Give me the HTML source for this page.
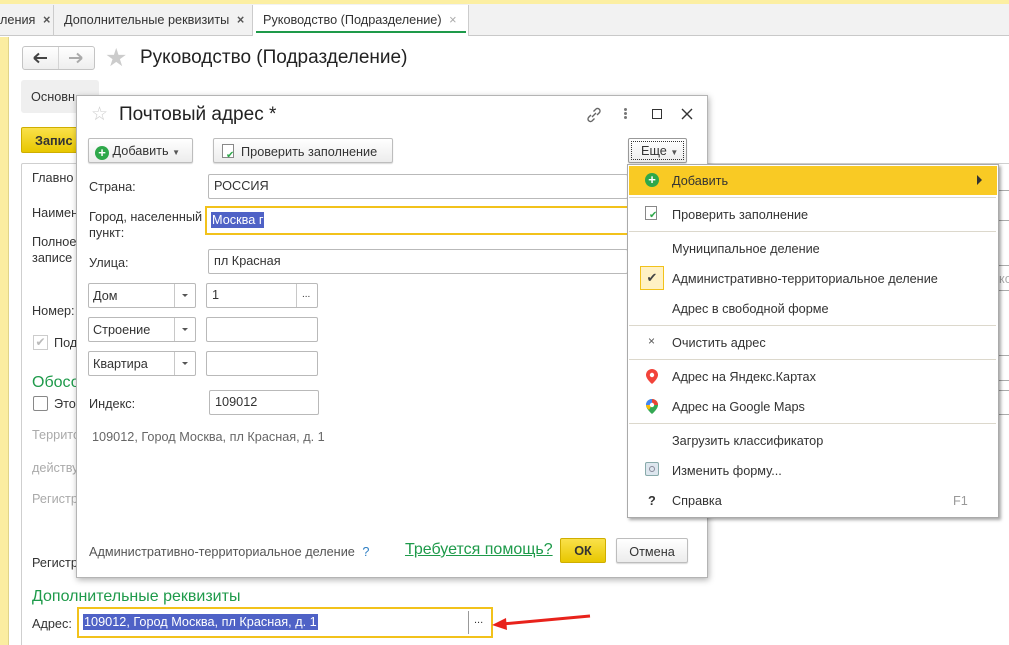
<!DOCTYPE html>
<html><head><meta charset="utf-8"><style>
*{box-sizing:border-box;margin:0;padding:0}
html,body{width:1009px;height:645px;overflow:hidden}
body{position:relative;background:#fff;font-family:"Liberation Sans",Arial,sans-serif;font-size:12.7px;color:#333}
.a{position:absolute;white-space:nowrap}
.inp{position:absolute;border:1px solid #b9b9b9;border-radius:2px;background:#fff;padding:4px 5px;color:#333}
.btn{position:absolute;border:1px solid #bdbdbd;border-radius:2px;background:linear-gradient(#fff,#ececec);box-shadow:0 1px 1px rgba(0,0,0,.15);color:#333;padding:4px 8px}
.sel{position:absolute;border:1px solid #b9b9b9;border-radius:2px;background:#fff}
.sel span{position:absolute;left:4px;top:5px}
.sel i{position:absolute;right:0;top:0;bottom:0;width:21px;border-left:1px solid #c8c8c8}
.sel i:after{content:"";position:absolute;left:7px;top:10px;border:3px solid transparent;border-top:3px solid #555}
.mi{position:absolute;left:672px;color:#333}
.sep{position:absolute;left:629px;width:367px;height:1px;background:#dcd8cc}
.g{color:#aaa}
</style></head><body>
<div class="a" style="left:0;top:0;width:1009px;height:4px;background:#fcefa3"></div>
<div class="a" style="left:0;top:4px;width:1009px;height:32px;background:#f2f2f2;border-bottom:1px solid #c9c9c9"></div>
<div class="a" style="left:0;top:5px;width:54px;height:31px;border-right:1px solid #ccc;padding:8px 0 0 0">ления <b style="margin-left:4px;color:#555">×</b></div>
<div class="a" style="left:54px;top:5px;width:199px;height:31px;border-right:1px solid #ccc;padding:8px 0 0 10px">Дополнительные реквизиты <b style="margin-left:4px;color:#555">×</b></div>
<div class="a" style="left:253px;top:5px;width:216px;height:31px;background:#fff;border-right:1px solid #ccc;padding:8px 0 0 10px">Руководство (Подразделение) <span style="margin-left:4px;color:#aaa">×</span></div>
<div class="a" style="left:256px;top:31px;width:210px;height:2px;background:#1e9a4a"></div>
<div class="a" style="left:0;top:37px;width:9px;height:608px;background:#fbeda1;border-right:1px solid #e0d48a"></div>
<div class="a" style="left:22px;top:46px;width:73px;height:24px;border:1px solid #c4c4c4;border-radius:3px;background:linear-gradient(#fff,#eee)"></div>
<div class="a" style="left:58px;top:47px;width:1px;height:22px;background:#d4d4d4"></div>
<svg class="a" style="left:32px;top:51px" width="16" height="14"><path d="M2 7H15M2 7L7 2.5M2 7L7 11.5" stroke="#444" stroke-width="2" fill="none"/></svg>
<svg class="a" style="left:68px;top:51px" width="16" height="14"><path d="M1 7H14M14 7L9 2.5M14 7L9 11.5" stroke="#aaa" stroke-width="2" fill="none"/></svg>
<div class="a" style="left:105px;top:43px;font-size:25px;color:#ccc">★</div>
<div class="a" style="left:140px;top:47px;font-size:19px;color:#222">Руководство (Подразделение)</div>
<div class="a" style="left:21px;top:80px;width:78px;height:33px;background:#efefef;border-radius:3px;padding:10px 0 0 10px">Основн</div>
<div class="a" style="left:21px;top:127px;width:60px;height:26px;background:linear-gradient(#fae14a,#e8c700);border:1px solid #cfae00;border-radius:2px;padding:6px 0 0 13px;font-weight:bold;color:#333">Запис</div>
<div class="a" style="left:21px;top:163px;width:1000px;height:490px;border:1px solid #cfcfcf;border-radius:2px"></div>
<div class="a" style="left:32px;top:171px">Главно</div>
<div class="a" style="left:32px;top:206px">Наимен</div>
<div class="a" style="left:32px;top:235px">Полное</div>
<div class="a" style="left:32px;top:251px">записе</div>
<div class="a" style="left:32px;top:304px">Номер:</div>
<div class="a" style="left:33px;top:335px;width:15px;height:15px;border:1px solid #ccc;color:#bbb;font-size:12px;line-height:13px;text-align:center">✔</div>
<div class="a" style="left:54px;top:336px">Под</div>
<div class="a" style="left:32px;top:374px;font-size:16px;color:#1e9a4a">Обосо</div>
<div class="a" style="left:33px;top:396px;width:15px;height:15px;border:1px solid #888;border-radius:2px"></div>
<div class="a" style="left:54px;top:397px">Это</div>
<div class="a g" style="left:32px;top:428px">Террито</div>
<div class="a g" style="left:32px;top:461px">действу</div>
<div class="a g" style="left:32px;top:492px">Регистр</div>
<div class="a" style="left:32px;top:556px">Регистр</div>
<div class="a" style="left:32px;top:588px;font-size:16px;color:#1e9a4a">Дополнительные реквизиты</div>
<div class="a" style="left:32px;top:617px">Адрес:</div>
<div class="a" style="left:77px;top:607px;width:416px;height:31px;border:2px solid #f2c21b;background:#fff"></div>
<div class="a" style="left:83px;top:614px;background:#4f62c6;color:#fff;padding:1px 1px">109012, Город Москва, пл Красная, д. 1</div>
<div class="a" style="left:468px;top:611px;width:1px;height:23px;background:#999"></div>
<div class="a" style="left:474px;top:614px;font-size:11px">...</div>
<svg class="a" style="left:490px;top:610px" width="105" height="22"><line x1="100" y1="6" x2="12" y2="14" stroke="#e8221b" stroke-width="3"/><polygon points="2,15 16,8 17,20" fill="#e8221b"/></svg>
<div class="a" style="left:999px;top:190px;width:10px;height:1px;background:#aaa"></div>
<div class="a" style="left:999px;top:220px;width:10px;height:1px;background:#aaa"></div>
<div class="a" style="left:999px;top:265px;width:10px;height:1px;background:#aaa"></div>
<div class="a" style="left:999px;top:290px;width:10px;height:1px;background:#aaa"></div>
<div class="a" style="left:999px;top:355px;width:10px;height:1px;background:#aaa"></div>
<div class="a" style="left:999px;top:380px;width:10px;height:1px;background:#aaa"></div>
<div class="a" style="left:999px;top:390px;width:10px;height:1px;background:#aaa"></div>
<div class="a" style="left:999px;top:414px;width:10px;height:1px;background:#aaa"></div>
<div class="a g" style="left:999px;top:272px">ко</div>
<!-- dialog -->
<div class="a" style="left:76px;top:95px;width:632px;height:483px;background:#fff;border:1px solid #b4b4b4;box-shadow:1px 2px 6px rgba(0,0,0,.3)"></div>
<div class="a" style="left:91px;top:103px;font-size:19px;color:#ccc">☆</div>
<div class="a" style="left:119px;top:104px;font-size:19px;color:#222">Почтовый адрес *</div>
<svg class="a" style="left:585px;top:106px" width="18" height="18" fill="none" stroke="#666" stroke-width="1.4"><path d="M7 11 L11 7 M6 9 L3.5 11.5 a2.5 2.5 0 0 0 3.5 3.5 L9.5 12.5 M12 9 L14.5 6.5 a2.5 2.5 0 0 0 -3.5 -3.5 L8.5 5.5"/></svg>
<div class="a" style="left:624px;top:108px;width:3px;height:3px;background:#777;border-radius:50%;box-shadow:0 4px 0 #777,0 8px 0 #777"></div>
<div class="a" style="left:652px;top:109px;width:10px;height:10px;border:1.5px solid #333"></div>
<svg class="a" style="left:681px;top:108px" width="12" height="12"><path d="M1 1L11 11M11 1L1 11" stroke="#333" stroke-width="1.4"/></svg>
<div class="btn" style="left:88px;top:138px;width:105px;height:25px;padding:5px 0 0 6px"><span style="display:inline-block;width:14px;height:14px;border-radius:50%;background:#2ea84a;color:#fff;font-weight:bold;font-size:13px;line-height:13px;text-align:center;vertical-align:-2px">+</span> Добавить <span style="font-size:8px;color:#555">▼</span></div>
<div class="btn" style="left:213px;top:138px;width:180px;height:25px;padding:5px 0 0 8px"><span style="display:inline-block;width:12px;height:14px;border:1px solid #888;background:#fff;vertical-align:-2px;position:relative"><span style="position:absolute;left:3px;top:5px;color:#2ea84a;font-size:10px">✔</span></span> &nbsp;Проверить заполнение</div>
<div class="btn" style="left:628px;top:138px;width:59px;height:25px;padding:5px 0 0 12px;border-color:#999"><span style="position:absolute;inset:2px;border:1px dotted #333"></span>Еще <span style="font-size:8px;color:#555">▼</span></div>
<div class="a" style="left:89px;top:180px">Страна:</div>
<div class="inp" style="left:208px;top:174px;width:420px;height:25px">РОССИЯ</div>
<div class="a" style="left:89px;top:210px">Город, населенный</div>
<div class="a" style="left:89px;top:226px">пункт:</div>
<div class="a" style="left:205px;top:206px;width:430px;height:29px;border:2px solid #f2c21b;background:#fff"></div>
<div class="a" style="left:211px;top:212px;background:#4f62c6;color:#fff;padding:1px 1px">Москва г</div>
<div class="a" style="left:89px;top:256px">Улица:</div>
<div class="inp" style="left:208px;top:249px;width:420px;height:25px">пл Красная</div>
<div class="sel" style="left:88px;top:283px;width:108px;height:25px"><span>Дом</span><i></i></div>
<div class="inp" style="left:206px;top:283px;width:112px;height:25px">1</div>
<div class="a" style="left:296px;top:284px;width:1px;height:23px;background:#c8c8c8"></div>
<div class="a" style="left:302px;top:289px;font-size:10px">...</div>
<div class="sel" style="left:88px;top:317px;width:108px;height:25px"><span>Строение</span><i></i></div>
<div class="inp" style="left:206px;top:317px;width:112px;height:25px"></div>
<div class="sel" style="left:88px;top:351px;width:108px;height:25px"><span>Квартира</span><i></i></div>
<div class="inp" style="left:206px;top:351px;width:112px;height:25px"></div>
<div class="a" style="left:89px;top:397px">Индекс:</div>
<div class="inp" style="left:209px;top:390px;width:110px;height:25px">109012</div>
<div class="a" style="left:92px;top:430px;color:#666">109012, Город Москва, пл Красная, д. 1</div>
<div class="a" style="left:89px;top:545px;color:#555">Административно-территориальное деление <span style="color:#2f7fc4;margin-left:4px">?</span></div>
<div class="a" style="left:405px;top:541px;font-size:16px;color:#1e9a4a;text-decoration:underline">Требуется помощь?</div>
<div class="a" style="left:560px;top:538px;width:46px;height:25px;background:linear-gradient(#fae14a,#e8c700);border:1px solid #cfae00;border-radius:2px;text-align:center;padding-top:5px;font-weight:bold;color:#333">ОК</div>
<div class="btn" style="left:616px;top:538px;width:72px;height:25px;text-align:center;padding:6px 0 0">Отмена</div>
<!-- menu -->
<div class="a" style="left:627px;top:164px;width:372px;height:354px;background:#fff;border:1px solid #aaa;box-shadow:2px 2px 3px rgba(0,0,0,.35)"></div>
<div class="a" style="left:629px;top:166px;width:368px;height:29px;background:#f9ca24"></div>
<div class="a" style="left:645px;top:173px;width:14px;height:14px;border-radius:50%;background:#2ea84a;color:#fff;font-weight:bold;font-size:13px;line-height:13px;text-align:center">+</div>
<div class="mi" style="top:174px">Добавить</div>
<div class="a" style="left:977px;top:175px;border:5px solid transparent;border-left:5px solid #333;border-right:0"></div>
<div class="sep" style="top:197px"></div>
<div class="a" style="left:645px;top:206px;width:12px;height:14px;border:1px solid #888;background:#fff"><span style="position:absolute;left:3px;top:3px;color:#2ea84a;font-size:10px">✔</span></div>
<div class="mi" style="top:208px">Проверить заполнение</div>
<div class="sep" style="top:231px"></div>
<div class="mi" style="top:242px">Муниципальное деление</div>
<div class="a" style="left:640px;top:266px;width:24px;height:24px;background:#fff1c4;border:1px solid #f2c21b;text-align:center;color:#444;font-size:13px;line-height:22px">✔</div>
<div class="mi" style="top:272px">Административно-территориальное деление</div>
<div class="mi" style="top:302px">Адрес в свободной форме</div>
<div class="sep" style="top:325px"></div>
<div class="a" style="left:648px;top:334px;color:#555;font-size:12px">×</div>
<div class="mi" style="top:336px">Очистить адрес</div>
<div class="sep" style="top:359px"></div>
<svg class="a" style="left:645px;top:368px" width="14" height="17"><path d="M7 1a6 6 0 0 0-6 6c0 4 6 9 6 9s6-5 6-9a6 6 0 0 0-6-6z" fill="#f2433a"/><circle cx="7" cy="7" r="2.2" fill="#fff"/></svg>
<div class="mi" style="top:370px">Адрес на Яндекс.Картах</div>
<svg class="a" style="left:645px;top:398px" width="14" height="17"><path d="M7 1a6 6 0 0 0-6 6c0 4 6 9 6 9s6-5 6-9a6 6 0 0 0-6-6z" fill="#34a853"/><path d="M1 7a6 6 0 0 1 6-6v6z" fill="#4285f4"/><path d="M7 1a6 6 0 0 1 6 6H7z" fill="#ea4335"/><path d="M1 7h6l-3 5C2 10 1 8.5 1 7z" fill="#fbbc05"/><circle cx="7" cy="7" r="2.2" fill="#fff"/></svg>
<div class="mi" style="top:400px">Адрес на Google Maps</div>
<div class="sep" style="top:423px"></div>
<div class="mi" style="top:434px">Загрузить классификатор</div>
<div class="a" style="left:645px;top:462px;width:14px;height:14px;border:1px solid #8aa;background:#dde6ee;border-radius:2px"><span style="position:absolute;left:3px;top:3px;width:6px;height:6px;border-radius:50%;border:1.5px solid #889"></span></div>
<div class="mi" style="top:464px">Изменить форму...</div>
<div class="a" style="left:648px;top:494px;font-weight:bold;color:#333">?</div>
<div class="mi" style="top:494px">Справка</div>
<div class="a" style="left:953px;top:494px;color:#999">F1</div>
</body></html>
